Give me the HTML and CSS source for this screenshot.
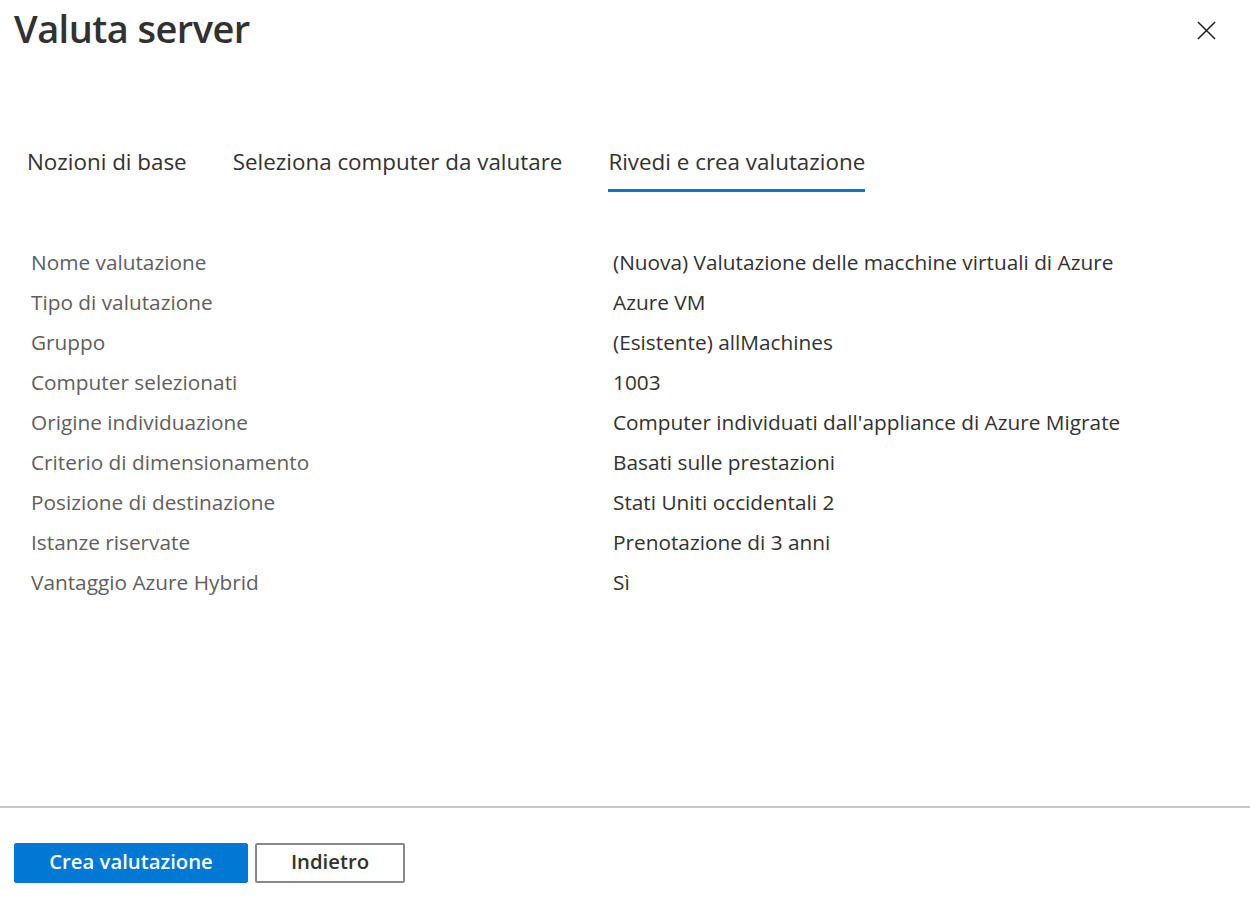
FILE: index.html
```html
<!DOCTYPE html>
<html lang="it">
<head>
<meta charset="utf-8">
<title>Valuta server</title>
<link rel="stylesheet" href="styles.css">
</head>
<body>
<div class="panel">
  <header class="head">
    <h1 class="title">Valuta server</h1>
    <button class="close" aria-label="Chiudi">
      <svg width="20" height="20" viewBox="0 0 20 20"><path d="M1 1 L19 19 M19 1 L1 19" stroke="#201f1e" stroke-width="1.6" fill="none"/></svg>
    </button>
  </header>
  <nav class="tabs">
    <span class="tab">Nozioni di base</span>
    <span class="tab">Seleziona computer da valutare</span>
    <span class="tab active">Rivedi e crea valutazione</span>
  </nav>
  <dl class="summary">
    <div class="row"><dt>Nome valutazione</dt><dd>(Nuova) Valutazione delle macchine virtuali di Azure</dd></div>
    <div class="row"><dt>Tipo di valutazione</dt><dd>Azure VM</dd></div>
    <div class="row"><dt>Gruppo</dt><dd>(Esistente) allMachines</dd></div>
    <div class="row"><dt>Computer selezionati</dt><dd>1003</dd></div>
    <div class="row"><dt>Origine individuazione</dt><dd>Computer individuati dall'appliance di Azure Migrate</dd></div>
    <div class="row"><dt>Criterio di dimensionamento</dt><dd>Basati sulle prestazioni</dd></div>
    <div class="row"><dt>Posizione di destinazione</dt><dd>Stati Uniti occidentali 2</dd></div>
    <div class="row"><dt>Istanze riservate</dt><dd>Prenotazione di 3 anni</dd></div>
    <div class="row"><dt>Vantaggio Azure Hybrid</dt><dd>Sì</dd></div>
  </dl>
  <footer class="foot">
    <button class="btn primary">Crea valutazione</button>
    <button class="btn secondary">Indietro</button>
  </footer>
</div>
</body>
</html>
```
FILE: styles.css
```css
* { box-sizing: border-box; }
html, body { margin: 0; padding: 0; background: #fff; }
body {
  font-family: "Open Sans", "Noto Sans", "Liberation Sans", sans-serif;
  color: #323130;
  width: 1250px;
  height: 903px;
  overflow: hidden;
}
.panel {
  display: flex;
  flex-direction: column;
  height: 903px;
}
.head {
  display: flex;
  justify-content: space-between;
  align-items: flex-start;
  padding: 0 34px 0 14px;
  height: 120px;
}
.title {
  margin: 2px 0 0 0;
  font-size: 38px;
  font-weight: 600;
  letter-spacing: -0.55px;
  line-height: 52px;
  color: #323130;
}
.close {
  margin-top: 21px;
  width: 19px;
  height: 19px;
  padding: 0;
  border: 0;
  background: none;
  display: flex;
}
.close svg { width: 19px; height: 19px; }
.tabs {
  display: flex;
  gap: 46px;
  padding-left: 27px;
  height: 72px;
}
.tab {
  font-size: 22.4px;
  color: #323130;
  line-height: 30px;
  padding-top: 27px;
  border-bottom: 3px solid transparent;
}
.tab.active {
  border-bottom-color: #0078d4;
}
.summary {
  margin: 50px 0 0 0;
  padding-left: 31px;
  flex: 1;
}
.row {
  display: grid;
  grid-template-columns: 582px 1fr;
  height: 40px;
  align-items: center;
}
.row dt {
  font-size: 20.8px;
  color: #605e5c;
}
.row dd {
  margin: 0;
  font-size: 20.8px;
  color: #323130;
}
.foot {
  border-top: 2px solid #c8c6c4;
  height: 97px;
  display: flex;
  gap: 7px;
  padding: 35px 0 0 14px;
}
.btn {
  height: 40px;
  border-radius: 2px;
  font-family: inherit;
  font-size: 20.3px;
  font-weight: 600;
  line-height: 32px;
  padding: 0 0 4px 0;
}
.primary {
  width: 234px;
  background: #0078d4;
  border: 1px solid #0078d4;
  color: #fff;
}
.secondary {
  width: 150px;
  background: #fff;
  border: 2px solid #8a8886;
  color: #323130;
}
```
